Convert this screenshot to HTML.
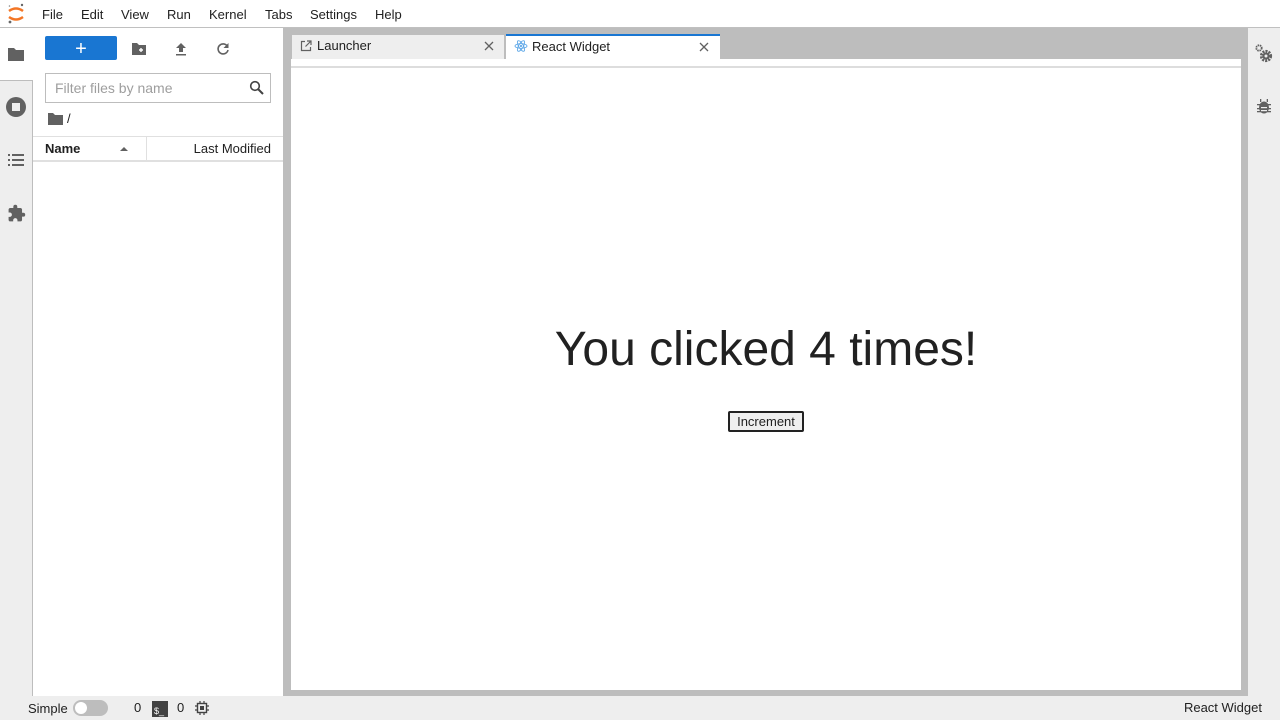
<!DOCTYPE html>
<html><head><style>
*{box-sizing:border-box;margin:0;padding:0}
body{width:1280px;height:720px;overflow:hidden;font-family:"Liberation Sans",sans-serif;font-size:13px;color:#212121;background:#bdbdbd;position:relative}
.abs{position:absolute}
#menu{left:0;top:0;width:1280px;height:28px;background:#fff;border-bottom:1px solid #c0c0c0}
#menu span{position:absolute;top:7px;font-size:13px}
#lside{left:0;top:28px;width:33px;height:668px;background:#eee;border-right:1px solid #bdbdbd}
#panel{left:33px;top:28px;width:250px;height:668px;background:#fff}
#rside{left:1248px;top:28px;width:32px;height:668px;background:#eee}
#status{left:0;top:696px;width:1280px;height:24px;background:#eee}
#main{left:291px;top:59px;width:950px;height:631px;background:#fff;border-top:1px solid #fff}
svg{display:block}
</style></head><body>
<div id="menu" class="abs">
<svg class="abs" style="left:7px;top:3px" width="18" height="22" viewBox="0 0 18 22"><path d="M2 8 Q9 3 16 8" stroke="#f37626" stroke-width="2.5" fill="none"/><path d="M2 14 Q9 19 16 14" stroke="#f37626" stroke-width="2.5" fill="none"/><circle cx="15" cy="2" r="1.2" fill="#666"/><circle cx="3" cy="19" r="1.4" fill="#666"/><circle cx="2.5" cy="3" r="0.8" fill="#888"/></svg>
<span style="left:42px">File</span><span style="left:81px">Edit</span><span style="left:121px">View</span><span style="left:167px">Run</span><span style="left:209px">Kernel</span><span style="left:265px">Tabs</span><span style="left:310px">Settings</span><span style="left:375px">Help</span>
</div>
<div id="lside" class="abs">
<div class="abs" style="left:0;top:0;width:33px;height:53px;background:#fff;border-bottom:1px solid #bdbdbd"></div>
<svg class="abs" style="left:7px;top:18px" width="18" height="16" viewBox="0 0 18 16"><path d="M1 2h6l2 2h8v11H1z" fill="#616161"/></svg>
<svg class="abs" style="left:6px;top:69px" width="20" height="20"><circle cx="10" cy="10" r="10" fill="#616161"/><rect x="6" y="6" width="8" height="8" fill="#eee"/></svg>
<svg class="abs" style="left:7px;top:125px" width="18" height="14" fill="#616161"><rect x="1" y="1" width="2" height="2"/><rect x="5" y="1" width="12" height="2"/><rect x="1" y="6" width="2" height="2"/><rect x="5" y="6" width="12" height="2"/><rect x="1" y="11" width="2" height="2"/><rect x="5" y="11" width="12" height="2"/></svg>
<svg class="abs" style="left:7px;top:176px" width="19" height="19" viewBox="0 0 24 24"><path fill="#616161" d="M20.5 11H19V7c0-1.1-.9-2-2-2h-4V3.5a2.5 2.5 0 0 0-5 0V5H4c-1.1 0-2 .9-2 2v3.8h1.5c1.5 0 2.7 1.2 2.7 2.7S5 16.2 3.5 16.2H2V20c0 1.1.9 2 2 2h3.8v-1.5c0-1.5 1.2-2.7 2.7-2.7s2.7 1.2 2.7 2.7V22H17c1.1 0 2-.9 2-2v-4h1.5a2.5 2.5 0 0 0 0-5z"/></svg>
</div>
<div id="panel" class="abs">
<div class="abs" style="left:12px;top:8px;width:72px;height:24px;background:#1976d2;border-radius:2px;color:#fff;font-size:20px;line-height:26px;text-align:center">+</div>
<svg class="abs" style="left:98px;top:14px" width="16" height="14" viewBox="0 0 16 14"><path d="M1 1h5l2 2h7v10H1z" fill="#616161"/><path d="M8 8h4M10 6v4" stroke="#fff" stroke-width="1.4"/></svg>
<svg class="abs" style="left:142px;top:14px" width="12" height="14"><path d="M6 1L1 6h3v4h4V6h3z M1 12h10v1.5H1z" fill="#616161"/></svg>
<svg class="abs" style="left:183px;top:14px" width="14" height="14" viewBox="0 0 14 14"><path d="M11.5 4.5A5 5 0 1 0 12 8" stroke="#616161" stroke-width="1.6" fill="none"/><path d="M12.5 1v5h-5z" fill="#616161"/></svg>
<div class="abs" style="left:12px;top:45px;width:226px;height:30px;border:1px solid #bdbdbd;color:#9e9e9e;font-size:14px;padding:6px 9px">Filter files by name</div>
<svg class="abs" style="left:216px;top:52px" width="15" height="15"><circle cx="6" cy="6" r="4.3" stroke="#424242" stroke-width="1.6" fill="none"/><path d="M9 9l5 5" stroke="#424242" stroke-width="2"/></svg>
<svg class="abs" style="left:15px;top:84px" width="15" height="13" viewBox="0 0 15 13"><path d="M0 1h5l2 2h8v10H0z" fill="#616161"/></svg>
<span class="abs" style="left:34px;top:83px">/</span>
<div class="abs" style="left:0;top:108px;width:250px;height:26px;border-top:1px solid #e0e0e0;border-bottom:2px solid #e0e0e0"></div>
<div class="abs" style="left:113px;top:109px;width:1px;height:24px;background:#e0e0e0"></div>
<span class="abs" style="left:12px;top:113px;font-weight:bold">Name</span>
<svg class="abs" style="left:86px;top:118px" width="10" height="6"><path d="M1 5L5 1l4 4z" fill="#616161"/></svg>
<span class="abs" style="right:12px;top:113px">Last Modified</span>
</div>
<div class="abs" style="left:291px;top:34px;width:214px;height:25px;background:#eee;border:1px solid #bdbdbd;border-bottom:none"></div>
<svg class="abs" style="left:300px;top:40px" width="12" height="12"><path d="M5 1.5H1.5v9h9V7" stroke="#616161" fill="none" stroke-width="1.2"/><path d="M7 1h4v4M11 1L5.5 6.5" stroke="#616161" fill="none" stroke-width="1.2"/></svg>
<span class="abs" style="left:317px;top:38px">Launcher</span>
<svg class="abs" style="left:484px;top:41px" width="10" height="10"><path d="M1 1l8 8M9 1L1 9" stroke="#616161" stroke-width="1.3"/></svg>
<div class="abs" style="left:506px;top:34px;width:214px;height:26px;background:#fff;border-top:2px solid #1976d2"></div>
<svg class="abs" style="left:514px;top:39px" width="14" height="14" viewBox="0 0 14 14"><g stroke="#61a9e8" fill="none" stroke-width="0.9"><ellipse cx="7" cy="7" rx="6" ry="2.3"/><ellipse cx="7" cy="7" rx="6" ry="2.3" transform="rotate(60 7 7)"/><ellipse cx="7" cy="7" rx="6" ry="2.3" transform="rotate(120 7 7)"/></g><circle cx="7" cy="7" r="1.1" fill="#61a9e8"/></svg>
<span class="abs" style="left:532px;top:39px">React Widget</span>
<svg class="abs" style="left:699px;top:42px" width="10" height="10"><path d="M1 1l8 8M9 1L1 9" stroke="#616161" stroke-width="1.3"/></svg>
<div id="main" class="abs">
<div class="abs" style="left:0;top:6px;width:950px;height:2px;background:#ddd"></div>
<div class="abs" style="left:0;top:262px;width:950px;text-align:center;font-size:48px;color:#212121">You clicked 4 times!</div>
<div class="abs" style="left:437px;top:351px;width:76px;height:21px;border:2px solid #222;background:#efefef;font-size:13px;text-align:center;line-height:17px;border-radius:2px">Increment</div>
</div>
<div id="rside" class="abs">
<svg class="abs" style="left:7px;top:16px" width="20" height="20" viewBox="0 0 20 20" fill="#616161"><circle cx="4" cy="4" r="2.7" fill="none" stroke="#616161" stroke-width="1.8" stroke-dasharray="1.5 0.7"/><circle cx="11" cy="12" r="4.6" fill="none" stroke="#616161" stroke-width="3" stroke-dasharray="2 1"/><circle cx="11" cy="12" r="3.5"/><circle cx="11" cy="12" r="1.5" fill="#eee"/></svg>
<svg class="abs" style="left:9px;top:70px" width="14" height="16" viewBox="0 0 14 16" fill="#616161"><ellipse cx="7" cy="9.5" rx="5" ry="6"/><rect x="0" y="6" width="14" height="1.3"/><rect x="0" y="10" width="14" height="1.3"/><rect x="0" y="13" width="14" height="1.3"/><rect x="3" y="1" width="1.3" height="3"/><rect x="9.7" y="1" width="1.3" height="3"/><rect x="4" y="9" width="6" height="1.2" fill="#eee"/><rect x="4" y="12" width="6" height="1.2" fill="#eee"/></svg>
</div>
<div id="status" class="abs">
<span class="abs" style="left:28px;top:5px">Simple</span>
<div class="abs" style="left:73px;top:4px;width:35px;height:16px;border-radius:8px;background:#bdbdbd"></div>
<div class="abs" style="left:75px;top:6px;width:12px;height:12px;border-radius:6px;background:#fff"></div>
<span class="abs" style="left:134px;top:4px">0</span>
<div class="abs" style="left:152px;top:5px;width:16px;height:16px;background:#424242;color:#fff;font-size:9px;padding:5px 0 0 2px;line-height:10px">$_</div>
<span class="abs" style="left:177px;top:4px">0</span>
<svg class="abs" style="left:195px;top:5px" width="14" height="14" viewBox="0 0 14 14"><rect x="2.5" y="2.5" width="9" height="9" stroke="#424242" stroke-width="1.4" fill="none"/><rect x="5" y="5" width="4" height="4" fill="#424242"/><g stroke="#424242" stroke-width="1.2"><path d="M5 0v2.5M9 0v2.5M5 11.5V14M9 11.5V14M0 5h2.5M0 9h2.5M11.5 5H14M11.5 9H14"/></g></svg>
<span class="abs" style="right:18px;top:4px">React Widget</span>
</div>
</body></html>
